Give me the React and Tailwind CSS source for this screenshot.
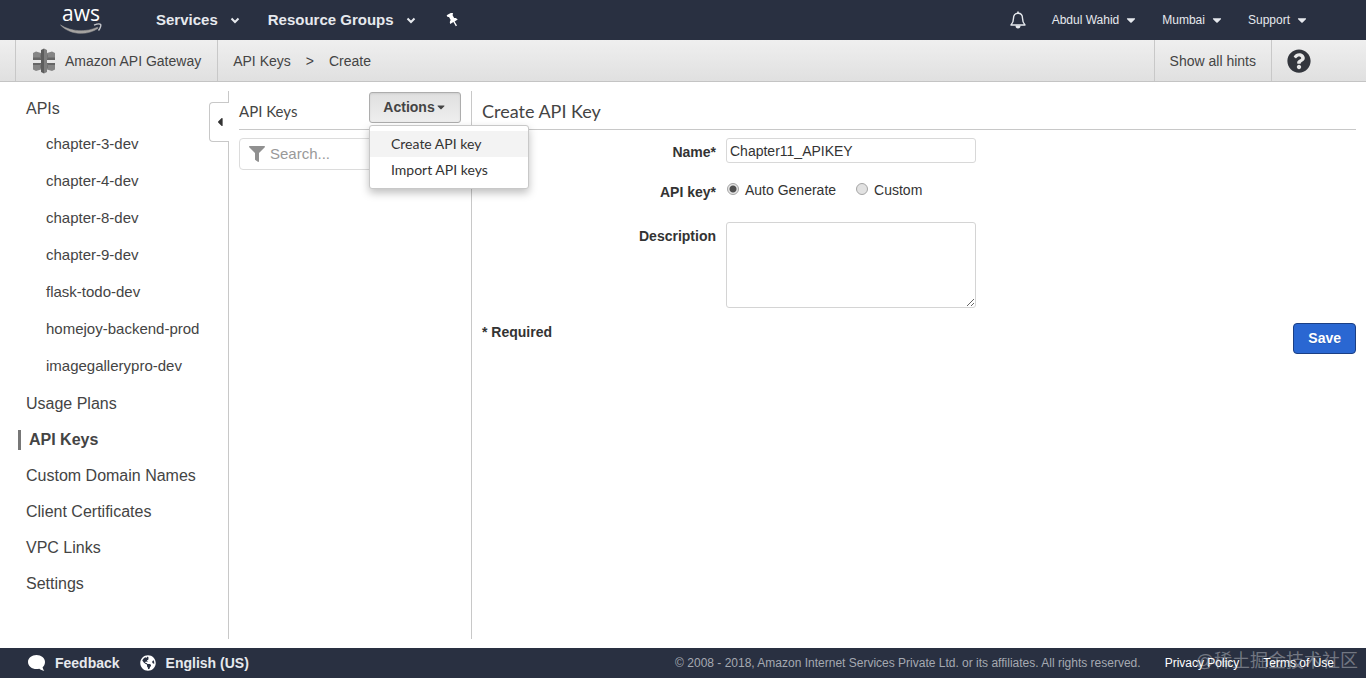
import { useState } from 'react';
import {
  FaCaretDown,
  FaCaretLeft,
  FaComment,
  FaFilter,
  FaGlobeAmericas,
  FaQuestionCircle,
} from 'react-icons/fa';

const apis = [
  'chapter-3-dev',
  'chapter-4-dev',
  'chapter-8-dev',
  'chapter-9-dev',
  'flask-todo-dev',
  'homejoy-backend-prod',
  'imagegallerypro-dev',
];

const sections = [
  'Usage Plans',
  'API Keys',
  'Custom Domain Names',
  'Client Certificates',
  'VPC Links',
  'Settings',
];

function AwsLogo() {
  return (
    <a href="#home" className="flex w-[42px] flex-col items-center pb-1 text-white">
      <span className="font-['Open_Sans',sans-serif] text-[21px] leading-5 font-medium">aws</span>
      <svg viewBox="0 0 42 11" className="h-[11px] w-[42px]" fill="none" aria-hidden="true">
        <path
          d="M.5 2C11 8.800 26 9.600 37.500 4.200l.6 1C27 13 10 12 .5 2z"
          fill="#a5a3a1"
          stroke="#a5a3a1"
          strokeWidth=".5"
        />
        <path
          d="M34 2.200c3-1.200 6-1.400 6.600-.7.600.9-.3 3.900-2.100 6"
          stroke="#c3c5ca"
          strokeWidth="1.400"
        />
      </svg>
    </a>
  );
}

function ChevronDown() {
  return (
    <svg viewBox="0 0 10 7" className="h-[7px] w-[10px]" fill="none" aria-hidden="true">
      <path d="M1.500 1.500L5 5l3.500-3.500" stroke="currentColor" strokeWidth="2" />
    </svg>
  );
}

function PinIcon() {
  return (
    <svg viewBox="0 0 14 14" className="size-[14px]" fill="currentColor" aria-hidden="true">
      <path
        d="M3.800-.2h6.400v1.900l-1.200.8v3.300c1.500.7 2.300 1.700 2.300 3.200H7.700v4.800H6.300V9H2.700c0-1.500.8-2.500 2.300-3.200V2.500l-1.200-.8z"
        transform="rotate(-30 7 7)"
      />
    </svg>
  );
}

function BellIcon() {
  return (
    <svg viewBox="0 0 16 18" className="h-[18px] w-4" fill="none" aria-hidden="true">
      <path
        d="M8 2.200c-3 0-4.500 2.200-4.500 5 0 3.500-.8 5-2.500 6.800h14c-1.700-1.800-2.500-3.300-2.500-6.800 0-2.800-1.500-5-4.500-5z"
        stroke="currentColor"
        strokeWidth="1.400"
        strokeLinejoin="round"
      />
      <path d="M8 .5v2" stroke="currentColor" strokeWidth="1.600" />
      <path d="M5.500 14.500h5a2.500 3 0 0 1-5 0z" fill="currentColor" />
    </svg>
  );
}

function GatewayIcon() {
  return (
    <svg viewBox="0 0 24 26" className="h-[26px] w-6" aria-hidden="true">
      <path d="M1 5l3-1.500L9 5v6.500H1zM15 5l5-1.500L23 5v6.500h-8z" fill="#858585" />
      <path d="M1 15h8v6.500l-5 1.500-3-1.500zM15 15h8v6.500L20 23l-5-1.500z" fill="#858585" />
      <path d="M1 9.500h8v2.500H1zM15 9.500h8v2.500h-8zM1 15h8v2H1zM15 15h8v2h-8z" fill="#666" />
      <path d="M8 6.500h8v4H8zM8 16h8v4H8z" fill="#747474" />
      <path d="M9 2l3-1.500v25L9 24z" fill="#5d5d5d" />
      <path d="M12 .5L15 2v22l-3 1.500z" fill="#7e7e7e" />
    </svg>
  );
}

function TopBar() {
  return (
    <header className="flex h-10 items-center bg-[#293041] text-[#e6e9ee]">
      <div className="ml-[60px] w-24">
        <AwsLogo />
      </div>
      <nav className="flex items-center text-[15px] font-bold">
        <button className="flex items-center gap-3">
          Services <ChevronDown />
        </button>
        <button className="ml-7 flex items-center gap-3">
          Resource Groups <ChevronDown />
        </button>
        <button className="ml-[30px] text-white" aria-label="Pin shortcuts">
          <PinIcon />
        </button>
      </nav>
      <nav className="mr-[57px] ml-auto flex items-center gap-6 text-xs">
        <button className="pr-[2px]" aria-label="Notifications">
          <BellIcon />
        </button>
        <button className="flex items-center gap-[5px]">
          Abdul Wahid <FaCaretDown className="size-[14px]" />
        </button>
        <button className="flex items-center gap-[5px]">
          Mumbai <FaCaretDown className="size-[14px]" />
        </button>
        <button className="flex items-center gap-[5px]">
          Support <FaCaretDown className="size-[14px]" />
        </button>
      </nav>
    </header>
  );
}

function Breadcrumbs() {
  return (
    <div className="flex h-[42px] border-b border-[#c4c4c4] bg-linear-to-b from-[#efefef] to-[#e0e0e0] text-sm text-[#444]">
      <a
        href="#gateway"
        className="ml-[15px] flex items-center gap-[9px] border-x border-[#c8c8c8] px-4"
      >
        <GatewayIcon />
        Amazon API Gateway
      </a>
      <nav className="flex items-center gap-[15px] pl-[15px]">
        <a href="#keys">API Keys</a>
        <span>&gt;</span>
        <span>Create</span>
      </nav>
      <button className="ml-auto border-x border-[#c8c8c8] px-[15px]">Show all hints</button>
      <button className="mr-[55px] pl-[15px]" aria-label="Help">
        <FaQuestionCircle className="size-6 text-[#33363d]" />
      </button>
    </div>
  );
}

function Sidebar() {
  return (
    <aside className="relative mt-[9px] mb-[9px] w-[229px] shrink-0 border-r border-[#c8c8c8] text-base text-[#444]">
      <a href="#apis" className="flex h-[35px] items-center pl-[26px]">
        APIs
      </a>
      <ul className="text-[15px]">
        {apis.map((name) => (
          <li key={name}>
            <a href={`#${name}`} className="flex h-[37px] items-center pl-[46px]">
              {name}
            </a>
          </li>
        ))}
      </ul>
      <ul className="mt-px">
        {sections.map((name) => (
          <li key={name} className="flex h-9 items-center">
            {name === 'API Keys' ? (
              <a href="#keys" className="ml-[18px] border-l-3 border-[#777] pl-2 leading-5 font-bold">
                {name}
              </a>
            ) : (
              <a href="#section" className="pl-[26px]">
                {name}
              </a>
            )}
          </li>
        ))}
      </ul>
      <button
        className="absolute top-[11px] -right-px flex h-10 w-5 items-center justify-center rounded-l border border-r-0 border-[#c8c8c8] bg-white"
        aria-label="Collapse sidebar"
      >
        <FaCaretLeft className="size-[14px] text-[#333]" />
      </button>
    </aside>
  );
}

function ActionsMenu() {
  return (
    <div className="relative">
      <button className="flex h-[31px] w-[92px] items-center justify-center rounded-[3px] border border-[#adadad] bg-linear-to-b from-[#e0e0e0] to-[#eee] pb-px text-sm font-bold text-[#444] shadow-[inset_0_1px_2px_rgba(0,0,0,0.08)]">
        Actions <FaCaretDown className="size-3" />
      </button>
      <div
        className="absolute top-[33px] left-0 z-10 w-40 rounded-[3px] border border-[#c8c8c8] bg-white py-[5px] font-['Lato',sans-serif] text-sm text-[#333] shadow-[0_4px_8px_rgba(0,0,0,0.25)]"
        role="menu"
      >
        <button role="menuitem" className="block h-[26px] w-full bg-[#f3f3f3] px-[21px] text-left">
          Create API key
        </button>
        <button role="menuitem" className="block h-[26px] w-full px-[21px] text-left">
          Import API keys
        </button>
      </div>
    </div>
  );
}

function KeysPanel() {
  return (
    <section className="mt-[9px] mb-[9px] w-[243px] shrink-0 border-r border-[#c8c8c8] px-[10px]">
      <div className="flex h-[39px] items-start justify-between border-b border-[#c8c8c8] pt-px">
        <h2 className="font-['Lato',sans-serif] text-[15px] leading-[38px] text-[#444]">
          API Keys
        </h2>
        <ActionsMenu />
      </div>
      <label className="mt-2 flex h-8 items-center gap-[5px] rounded border border-[#dcdcdc] pl-[9px]">
        <FaFilter className="size-4 shrink-0 text-[#909090]" />
        <input
          type="search"
          aria-label="Search"
          placeholder="Search..."
          className="w-full min-w-0 pt-px text-[15px] outline-none placeholder:text-[#999]"
        />
      </label>
    </section>
  );
}

const radioClass =
  'mb-[3px] size-3 appearance-none rounded-full border border-[#a5a5a5] bg-[#e2e2e2] checked:bg-[radial-gradient(circle,#505050_0_3px,#e6e6e6_4px)]';

function CreateKeyForm() {
  const [name, setName] = useState('Chapter11_APIKEY');
  const [mode, setMode] = useState('auto');

  return (
    <section className="mt-[9px] mr-[10px] ml-[10px] min-w-0 flex-1">
      <h1 className="h-[39px] border-b border-[#c8c8c8] font-['Lato',sans-serif] text-lg leading-[41px] text-[#444]">
        Create API Key
      </h1>
      <form className="pt-2 text-sm text-[#333]" onSubmit={(e) => e.preventDefault()}>
        <div className="flex gap-[10px]">
          <label htmlFor="name" className="w-[234px] pt-1 text-right font-bold">
            Name*
          </label>
          <input
            id="name"
            value={name}
            onChange={(e) => setName(e.target.value)}
            className="h-[25px] w-[250px] rounded-[3px] border border-[#d8d8d8] px-[3px]"
          />
        </div>
        <div className="mt-[17px] flex gap-[10px]" role="radiogroup" aria-labelledby="key-label">
          <span id="key-label" className="w-[234px] pt-[2px] text-right font-bold">
            API key*
          </span>
          <div className="flex items-start gap-5">
            <label className="flex items-center gap-[6px] pl-px">
              <input
                type="radio"
                name="mode"
                checked={mode === 'auto'}
                onChange={() => setMode('auto')}
                className={radioClass}
              />
              Auto Generate
            </label>
            <label className="flex items-center gap-[6px]">
              <input
                type="radio"
                name="mode"
                checked={mode === 'custom'}
                onChange={() => setMode('custom')}
                className={radioClass}
              />
              Custom
            </label>
          </div>
        </div>
        <div className="mt-5 flex gap-[10px]">
          <label htmlFor="description" className="w-[234px] pt-1 text-right font-bold">
            Description
          </label>
          <textarea
            id="description"
            className="h-[86px] w-[250px] rounded-[3px] border border-[#d4d4d4] px-[3px]"
          />
        </div>
        <div className="mt-[14px] flex items-start justify-between">
          <p className="font-bold">* Required</p>
          <button className="mt-px h-[31px] rounded border border-[#1b3f85] bg-[#2a67d2] px-[14px] pb-px font-bold text-white text-shadow-2xs">
            Save
          </button>
        </div>
      </form>
    </section>
  );
}

function FeedbackIcon() {
  return (
    <svg viewBox="0 0 17 16" className="h-4 w-[17px] text-white" fill="currentColor" aria-hidden="true">
      <path d="M8.500 0C13.200 0 17 3 17 6.900c0 2.200-.9 4-2.400 5.300.2 1.300.8 2.600 1.700 3.600-2-.2-3.800-.9-5-2-.9.200-1.800.3-2.800.3C3.800 14.100 0 10.900 0 7S3.800 0 8.500 0z" />
    </svg>
  );
}

function Footer() {
  return (
    <footer className="relative flex h-[30px] items-center bg-[#293041] text-[#e6e9ee]">
      <button className="ml-7 flex items-center gap-[10px] text-sm font-bold">
        <FeedbackIcon />
        Feedback
      </button>
      <button className="ml-5 flex items-center gap-[10px] text-sm font-bold">
        <FaGlobeAmericas className="size-4 text-white" />
        English (US)
      </button>
      <div className="mr-8 ml-auto flex gap-6 text-xs">
        <span className="text-[#a5a9b1]">
          © 2008 - 2018, Amazon Internet Services Private Ltd. or its affiliates. All rights
          reserved.
        </span>
        <a href="#privacy" className="text-white">
          Privacy Policy
        </a>
        <a href="#terms" className="text-white">
          Terms of Use
        </a>
      </div>
      <span className="pointer-events-none absolute right-2 bottom-[5px] font-['Liberation_Sans','Noto_Sans_CJK_SC',sans-serif] text-[18px] leading-6 text-white/35">
        @稀土掘金技术社区
      </span>
    </footer>
  );
}

export default function App() {
  return (
    <div className="flex min-h-screen flex-col bg-white font-['Liberation_Sans',Arial,sans-serif]">
      <TopBar />
      <Breadcrumbs />
      <main className="flex flex-1">
        <Sidebar />
        <KeysPanel />
        <CreateKeyForm />
      </main>
      <Footer />
    </div>
  );
}
